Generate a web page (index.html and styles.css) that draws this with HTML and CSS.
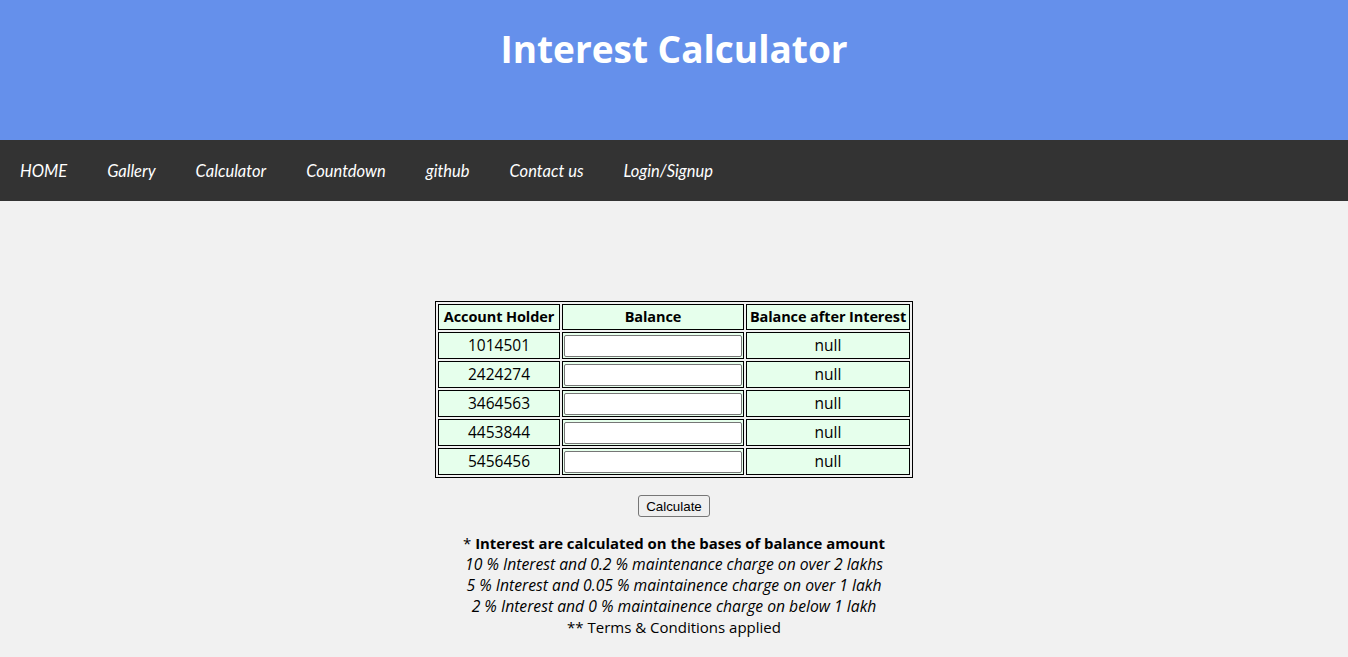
FILE: index.html
```html
<!DOCTYPE html>
<html lang="en">
<head>
<meta charset="utf-8">
<title>Interest Calculator</title>
<link rel="stylesheet" href="styles.css">
</head>
<body>
<header class="top">
  <h1 class="title">Interest Calculator</h1>
</header>
<nav class="nav">
  <a href="#">HOME</a>
  <a href="#">Gallery</a>
  <a href="#">Calculator</a>
  <a href="#">Countdown</a>
  <a href="#">github</a>
  <a href="#">Contact us</a>
  <a href="#">Login/Signup</a>
</nav>
<main class="main">
  <table class="calc">
    <tr><th class="c1">Account Holder</th><th class="bal">Balance</th><th class="c3">Balance after Interest</th></tr>
    <tr><td>1014501</td><td class="bal"><input class="inp" type="text"></td><td>null</td></tr>
    <tr><td>2424274</td><td class="bal"><input class="inp" type="text"></td><td>null</td></tr>
    <tr><td>3464563</td><td class="bal"><input class="inp" type="text"></td><td>null</td></tr>
    <tr><td>4453844</td><td class="bal"><input class="inp" type="text"></td><td>null</td></tr>
    <tr><td>5456456</td><td class="bal"><input class="inp" type="text"></td><td>null</td></tr>
  </table>
  <div class="btnrow"><button class="btn" type="button">Calculate</button></div>
  <div class="notes">
    <p>* <b>Interest are calculated on the bases of balance amount</b></p>
    <p><i>10 % Interest and 0.2 % maintenance charge on over 2 lakhs</i></p>
    <p><i>5 % Interest and 0.05 % maintainence charge on over 1 lakh</i></p>
    <p><i>2 % Interest and 0 % maintainence charge on below 1 lakh</i></p>
    <p>** Terms &amp; Conditions applied</p>
  </div>
</main>
<footer class="foot"></footer>
</body>
</html>
```
FILE: styles.css
```css
html, body {
  margin: 0;
  padding: 0;
}
body {
  background: #f1f1f1;
  font-family: "Open Sans", "Noto Sans", sans-serif;
  color: #000;
}
.top {
  background: #6590eb;
  height: 140px;
  box-sizing: border-box;
  padding-top: 25px;
}
.title {
  margin: 0;
  text-align: center;
  color: #fff;
  font-size: 37px;
  line-height: 48px;
  font-weight: 700;
}
.nav {
  background: #333333;
  height: 61px;
  display: flex;
  align-items: center;
  padding-top: 1px;
  box-sizing: border-box;
}
.nav a {
  color: #fff;
  text-decoration: none;
  font-family: Lato, sans-serif;
  font-style: italic;
  font-size: 16.5px;
  padding: 0 20px;
}
.main {
  padding-top: 100px;
  text-align: center;
  padding-bottom: 19px;
}
.calc {
  margin: 0 auto;
  border: 1px solid #000;
  border-spacing: 2px;
  font-size: 15.5px;
  table-layout: fixed;
}
.calc th, .calc td {
  border: 1px solid #000;
  background: #e6ffec;
  padding: 1px;
  text-align: center;
  white-space: nowrap;
  overflow: hidden;
}
.calc th {
  height: 22px;
  line-height: 22px;
  font-weight: 700;
  font-size: 14.5px;
  letter-spacing: -0.1px;
}
.calc td {
  height: 23px;
  line-height: 23px;
}
.calc .c1 { width: 118px; }
.calc .bal { width: 178px; }
.calc .c3 { width: 160px; }
.inp {
  display: block;
  box-sizing: border-box;
  width: 178px;
  height: 22px;
  margin: 0;
  border: 1px solid #767676;
  border-radius: 2px;
  background: #fff;
  padding: 1px 2px;
}
.btnrow {
  margin-top: 17px;
  display: flex;
  justify-content: center;
}
.btn {
  font-family: "Liberation Sans", Arial, sans-serif;
  font-size: 13.33px;
  box-sizing: border-box;
  height: 22px;
  padding: 1px 7px;
  background: #efefef;
  border: 1px solid #767676;
  border-radius: 3px;
  color: #000;
}
.notes {
  margin-top: 16px;
  font-size: 15px;
  line-height: 21px;
}
.notes p {
  margin: 0;
}
.notes b {
  font-size: 14.9px;
}
.notes i {
  font-size: 15.7px;
}
.foot {
  background: #2a2522;
  height: 40px;
}
```
